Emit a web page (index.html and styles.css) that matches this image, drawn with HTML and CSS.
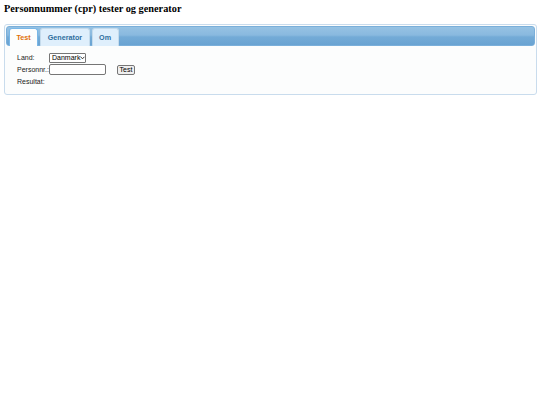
FILE: index.html
```html
<!DOCTYPE html>
<html lang="da">
<head>
<meta charset="utf-8">
<title>Personnummer (cpr) tester og generator</title>
<link rel="stylesheet" href="styles.css">
</head>
<body>
<h1 class="title">Personnummer (cpr) tester og generator</h1>
<div class="tabs">
  <ul class="tab-nav">
    <li class="tab tab-active"><a href="#test">Test</a></li>
    <li class="tab"><a href="#generator">Generator</a></li>
    <li class="tab"><a href="#om">Om</a></li>
  </ul>
  <div class="panel" id="test">
    <div class="form">
      <label class="lbl" for="land">Land:</label>
      <div class="field">
        <span class="select-wrap">
          <select id="land" class="select"><option>Danmark</option></select>
          <svg class="chev" width="5" height="4" viewBox="0 0 5 4"><path d="M0.6 0.8 L2.5 2.8 L4.4 0.8" fill="none" stroke="#222" stroke-width="0.9"/></svg>
        </span>
      </div>
      <label class="lbl" for="cpr">Personnr.:</label>
      <div class="field">
        <input id="cpr" class="input" type="text">
        <button class="btn" type="button">Test</button>
      </div>
      <span class="lbl">Resultat:</span>
      <div class="field"></div>
    </div>
  </div>
</div>
</body>
</html>
```

FILE: styles.css
```css
html, body {
  background: #ffffff;
}
body {
  margin: 0;
  padding: 2px 3px 0 4px;
}
.title {
  font-family: "Liberation Serif", "Times New Roman", serif;
  font-weight: bold;
  font-size: 10.3px;
  line-height: 14px;
  margin: 0 0 8px 0;
  color: #000;
}
.tabs {
  border: 1px solid #c9dced;
  border-radius: 3px;
  background: #fcfdfd;
  padding: 1px;
  font-family: "Liberation Sans", Arial, sans-serif;
}
.tab-nav {
  list-style: none;
  margin: 0;
  padding: 1px 2px 0 2px;
  display: flex;
  gap: 2px;
  border: 1px solid #7aafda;
  border-radius: 3px;
  background: linear-gradient(to bottom, #96c2e3 0%, #89b9df 45%, #74abd7 55%, #69a3d2 100%);
}
.tab {
  height: 18px;
  margin-bottom: -1px;
  border: 1px solid #c5dbec;
  border-bottom: none;
  border-radius: 3px 3px 0 0;
  background: #dfeffc;
  box-sizing: border-box;
  display: flex;
  align-items: center;
}
.tab a {
  font-size: 7.2px;
  font-weight: bold;
  color: #2e6e9e;
  text-decoration: none;
  padding: 0 6.5px;
}
.tab-active {
  background: #fcfdfd;
  border-color: #79b7e7;
}
.tab-active a {
  color: #e17009;
}
.panel {
  padding: 6px 10px 6px 11px;
  font-size: 7px;
  color: #222;
}
.form {
  display: grid;
  grid-template-columns: 32px auto;
  align-items: center;
  row-gap: 1px;
}
.lbl {
  font-size: 7px;
  line-height: 11px;
  color: #222;
  white-space: nowrap;
}
.field {
  display: flex;
  align-items: center;
  min-height: 11px;
}
.select-wrap {
  position: relative;
  display: inline-block;
  height: 10px;
}
.select {
  appearance: none;
  -webkit-appearance: none;
  display: block;
  font-family: "Liberation Sans", Arial, sans-serif;
  font-size: 7px;
  width: 37px;
  height: 10px;
  padding: 0 0 0 2px;
  margin: 0;
  border: 1px solid #767676;
  border-radius: 1px;
  background: #fff;
  color: #000;
  line-height: 8px;
  box-sizing: border-box;
}
.chev {
  position: absolute;
  right: 1px;
  top: 3px;
  pointer-events: none;
}
.input {
  width: 57px;
  height: 11px;
  box-sizing: border-box;
  border: 1px solid #767676;
  border-radius: 2px;
  padding: 0 2px;
  margin: 0;
  font-size: 7px;
  background: #fff;
}
.btn {
  margin-left: 11px;
  width: 18px;
  height: 10px;
  box-sizing: border-box;
  padding: 0;
  font-family: "Liberation Sans", Arial, sans-serif;
  font-size: 7px;
  line-height: 8px;
  color: #000;
  background: #efefef;
  border: 1px solid #767676;
  border-radius: 2px;
}
```
